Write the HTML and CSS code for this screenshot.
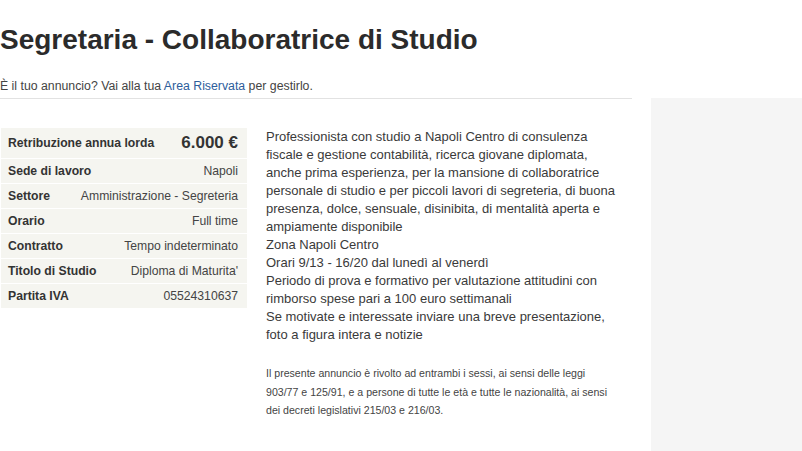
FILE: index.html
```html
<!DOCTYPE html>
<html lang="it">
<head>
<meta charset="utf-8">
<title>Segretaria - Collaboratrice di Studio</title>
<link rel="stylesheet" href="styles.css">
</head>
<body>
<header class="head">
  <h1 class="title">Segretaria - Collaboratrice di Studio</h1>
  <p class="owner">È il tuo annuncio? Vai alla tua <a href="#" class="link">Area Riservata</a> per gestirlo.</p>
</header>
<div class="page">
  <main class="main">
    <div class="facts">
      <div class="row first"><span class="key">Retribuzione annua lorda</span><span class="val salary">6.000 €</span></div>
      <div class="row"><span class="key">Sede di lavoro</span><span class="val">Napoli</span></div>
      <div class="row"><span class="key">Settore</span><span class="val">Amministrazione - Segreteria</span></div>
      <div class="row"><span class="key">Orario</span><span class="val">Full time</span></div>
      <div class="row"><span class="key">Contratto</span><span class="val">Tempo indeterminato</span></div>
      <div class="row"><span class="key">Titolo di Studio</span><span class="val">Diploma di Maturita'</span></div>
      <div class="row"><span class="key">Partita IVA</span><span class="val">05524310637</span></div>
    </div>
    <div class="desc">
      <p class="body-text">Professionista con studio a Napoli Centro di consulenza fiscale e gestione contabilità, ricerca giovane diplomata, anche prima esperienza, per la mansione di collaboratrice personale di studio e per piccoli lavori di segreteria, di buona presenza, dolce, sensuale, disinibita, di mentalità aperta e ampiamente disponibile<br>Zona Napoli Centro<br>Orari 9/13 - 16/20 dal lunedì al venerdì<br>Periodo di prova e formativo per valutazione attitudini con rimborso spese pari a 100 euro settimanali<br>Se motivate e interessate inviare una breve presentazione, foto a figura intera e notizie</p>
      <p class="legal">Il presente annuncio è rivolto ad entrambi i sessi, ai sensi delle leggi 903/77 e 125/91, e a persone di tutte le età e tutte le nazionalità, ai sensi dei decreti legislativi 215/03 e 216/03.</p>
    </div>
  </main>
  <aside class="side"></aside>
</div>
</body>
</html>
```
FILE: styles.css
```css
html, body {
  margin: 0;
  padding: 0;
  background: #fff;
}
body {
  font-family: "Liberation Sans", Arial, sans-serif;
  color: #333;
  height: 451px;
  overflow: hidden;
}
.head {
  padding-top: 25px;
}
.title {
  margin: 0;
  font-size: 28px;
  line-height: 30px;
  font-weight: bold;
  color: #2b2b2b;
}
.owner {
  margin: 0;
  padding-top: 23px;
  font-size: 12.3px;
  line-height: 16px;
  color: #444;
}
.link {
  color: #2d5d9b;
  text-decoration: none;
}
.page {
  display: flex;
  margin-top: 4px;
  height: 360px;
}
.main {
  width: 632px;
  border-top: 1px solid #e2e2e2;
  display: flex;
  align-items: flex-start;
  padding-top: 29px;
  box-sizing: border-box;
}
.side {
  margin-left: 19px;
  flex: 1;
  background: #f5f5f5;
}
.facts {
  width: 246px;
  margin-left: 1px;
  flex: none;
  background: #f5f5f0;
  font-size: 12.2px;
  color: #333;
}
.row {
  display: flex;
  justify-content: space-between;
  align-items: center;
  height: 24px;
  padding: 0 9px 0 7px;
  border-bottom: 1px solid #fff;
  white-space: nowrap;
}
.row.first {
  height: 30px;
}
.row:last-child {
  border-bottom: none;
}
.key {
  font-weight: bold;
}
.val {
  color: #444;
}
.val.salary {
  font-size: 17px;
  font-weight: bold;
  color: #333;
}
.desc {
  margin-left: 19px;
  width: 356px;
}
.body-text {
  margin: 0;
  font-size: 13px;
  line-height: 18px;
  color: #3a3a3a;
}
.legal {
  margin: 20px 0 0;
  width: 346px;
  font-size: 10.6px;
  line-height: 18.5px;
  color: #444;
}
```
